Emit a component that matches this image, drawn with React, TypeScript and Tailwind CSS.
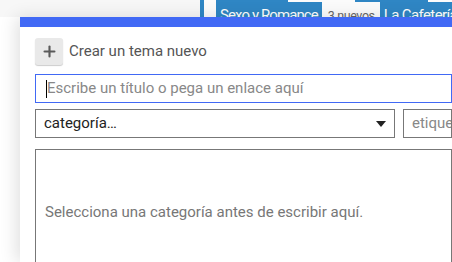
import { Plus } from "lucide-react";

const font = { fontFamily: "Roboto, 'Liberation Sans', sans-serif" };

export default function App() {
  return (
    <div className="relative w-[452px] h-[262px] overflow-hidden bg-white" style={font}>
      {/* page behind the composer */}
      <div className="flex h-[17px] bg-[#f7f7f7] overflow-hidden">
        <div className="w-[200px] shrink-0" />
        <div className="w-[4px] shrink-0 bg-[#2f86c4]" />
        <div className="flex flex-col pl-[12px] shrink-0 bg-[#fbfbfb]">
          <div className="flex h-[4px]">
            <div className="w-[72px] h-[2px] bg-[#2f86c4]" />
            <div className="w-[67px]" />
            <div className="w-[73px] h-[2px] bg-[#2f86c4]" />
          </div>
          <div className="flex items-start whitespace-nowrap">
            <span className="bg-[#2f86c4] text-white text-[15px] leading-[20px] pt-[3px] pl-[4px] pr-[4px] tracking-[-0.9px]">Sexo y Romance</span>
            <span className="text-[#666] text-[12.5px] leading-[20px] pt-[4px] pl-[6px] pr-[5px] tracking-[-0.4px]">3 nuevos</span>
            <span className="bg-[#2f86c4] text-white text-[15px] leading-[20px] pt-[3px] pl-[4px] pr-[4px] tracking-[-0.6px]">La Cafetería</span>
          </div>
        </div>
      </div>

      {/* composer */}
      <div className="absolute left-[20px] top-[17px] right-0 bottom-0 bg-white border-t-[10px] border-[#4169f5] shadow-[-4px_0_16px_rgba(0,0,0,0.12)]">
        <div className="flex flex-col pl-[15px] pt-[11px]">
          <div className="flex items-center gap-[6px] h-[27px]">
            <button className="flex items-center justify-center w-[28px] h-[27px] rounded-[3px] bg-[#e9e9e9] shadow-[0_1px_1px_rgba(0,0,0,0.2)]">
              <Plus size={17} strokeWidth={3} className="text-[#5a5a5a]" />
            </button>
            <span className="text-[15px] text-[#555]">Crear un tema nuevo</span>
          </div>
          <div className="mt-[9px] h-[29px] border border-[#4169f5] flex items-center pl-[10px] whitespace-nowrap overflow-hidden">
            <span className="w-[1px] h-[18px] bg-black" />
            <span className="text-[15px] text-[#888]">Escribe un título o pega un enlace aquí</span>
          </div>
          <div className="mt-[6px] flex gap-[8px] h-[29px]">
            <div className="w-[360px] shrink-0 border border-[#777] flex items-center justify-between pl-[8px] pr-[8px]">
              <span className="text-[15px] text-[#222]">categoría…</span>
              <svg width="10" height="6" viewBox="0 0 10 6">
                <path d="M0 0h10L5 6z" fill="#222" />
              </svg>
            </div>
            <div className="flex-1 border border-[#777] flex items-center pl-[8px] whitespace-nowrap overflow-hidden">
              <span className="text-[15px] text-[#888]">etique</span>
            </div>
          </div>
          <div className="mt-[11px] h-[140px] border border-[#777] pl-[9px] pt-[50px]">
            <span className="text-[15px] text-[#777] whitespace-nowrap">Selecciona una categoría antes de escribir aquí.</span>
          </div>
        </div>
      </div>
    </div>
  );
}
